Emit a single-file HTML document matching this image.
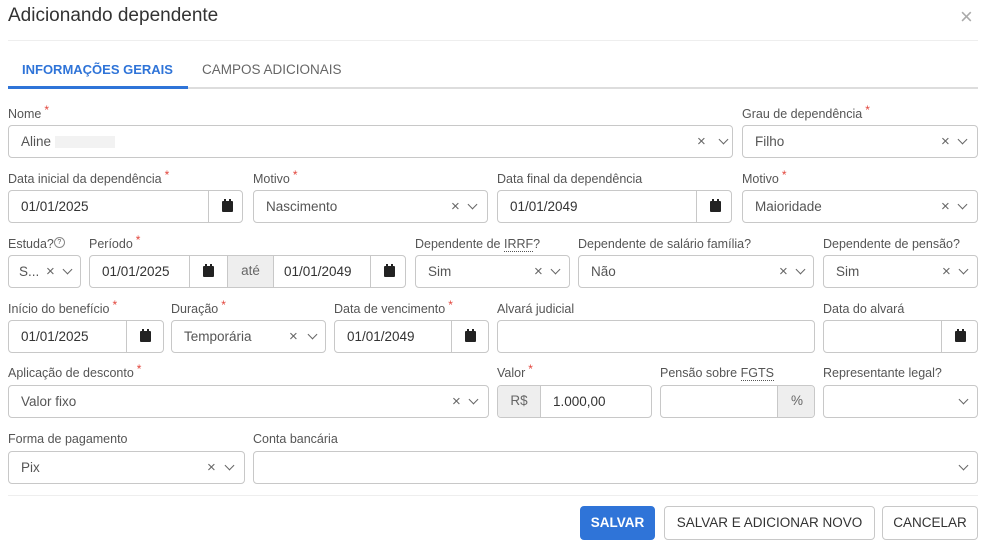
<!DOCTYPE html><html><head><style>
body{margin:0;width:986px;height:543px;background:#fff;font-family:"Liberation Sans",sans-serif;position:relative;overflow:hidden;color:#333}
.a{position:absolute}
.l{position:absolute;font-size:12.5px;color:#555;white-space:nowrap}
.l i{color:#e2453c;font-style:normal;font-size:12px;position:relative;top:-4px;margin-left:3px}
.f{position:absolute;height:33px;border:1px solid #c8c8c8;border-radius:4px;box-sizing:border-box;font-size:13.5px;color:#333;line-height:31px;padding-left:12px;white-space:nowrap;overflow:hidden}
.s{color:#555}
.x{position:absolute;top:0;font-size:15px;color:#666}
.cal{position:absolute;top:0;bottom:0;border-left:1px solid #c8c8c8;width:36px}
.cal:after{content:"";position:absolute;left:13px;top:10px;width:11px;height:11px;background:#222;border-radius:1px}
.cal:before{content:"";position:absolute;left:15px;top:8px;width:7px;height:3px;border-left:2px solid #222;border-right:2px solid #222;box-sizing:border-box}
.ch{position:absolute;top:10px;width:6px;height:6px;border-right:1.3px solid #666;border-bottom:1.3px solid #666;transform:rotate(45deg)}
.btn{position:absolute;top:506px;height:34px;border:1px solid #c8c8c8;border-radius:4px;box-sizing:border-box;font-size:13.5px;line-height:32px;text-align:center;color:#333}
</style></head><body>
<div class="a" style="left:8px;top:5px;font-size:19px;color:#333">Adicionando dependente</div>
<div class="a" style="left:960px;top:4px;font-size:22px;color:#aaa">×</div>
<div class="a" style="left:8px;top:40px;width:970px;height:1px;background:#eee"></div>
<div class="a" style="left:22px;top:62px;font-size:13px;font-weight:bold;color:#2f74d8">INFORMAÇÕES GERAIS</div>
<div class="a" style="left:202px;top:62px;font-size:13.5px;color:#666">CAMPOS ADICIONAIS</div>
<div class="a" style="left:8px;top:87px;width:970px;height:2px;background:#ddd"></div>
<div class="a" style="left:8px;top:86px;width:180px;height:3px;background:#2f74d8"></div>

<div class="l" style="left:8px;top:107px">Nome<i>*</i></div>
<div class="f s" style="left:8px;top:125px;width:725px">Aline <span style="display:inline-block;width:60px;height:12px;background:#f2f2f2;vertical-align:middle"></span><span class="x" style="left:688px">×</span><span class="ch" style="left:711px"></span></div>
<div class="l" style="left:742px;top:107px">Grau de dependência<i>*</i></div>
<div class="f s" style="left:742px;top:125px;width:236px">Filho<span class="x" style="left:198px">×</span><span class="ch" style="left:216px"></span></div>

<div class="l" style="left:8px;top:172px">Data inicial da dependência<i>*</i></div>
<div class="f" style="left:8px;top:190px;width:235px">01/01/2025<span class="cal" style="left:199px"></span></div>
<div class="l" style="left:253px;top:172px">Motivo<i>*</i></div>
<div class="f s" style="left:253px;top:190px;width:235px">Nascimento<span class="x" style="left:197px">×</span><span class="ch" style="left:215px"></span></div>
<div class="l" style="left:497px;top:172px">Data final da dependência</div>
<div class="f" style="left:497px;top:190px;width:235px">01/01/2049<span class="cal" style="left:198px"></span></div>
<div class="l" style="left:742px;top:172px">Motivo<i>*</i></div>
<div class="f s" style="left:742px;top:190px;width:236px">Maioridade<span class="x" style="left:198px">×</span><span class="ch" style="left:216px"></span></div>

<div class="l" style="left:8px;top:237px">Estuda?<span style="display:inline-block;width:9px;height:9px;border:1px solid #888;border-radius:50%;font-size:7px;line-height:9px;text-align:center;vertical-align:top">?</span></div>
<div class="f s" style="left:8px;top:255px;width:73px;padding-left:10px">S...<span class="x" style="left:37px">×</span><span class="ch" style="left:55px"></span></div>
<div class="l" style="left:89px;top:237px">Período<i>*</i></div>
<div class="f" style="left:89px;top:255px;width:317px">01/01/2025<span class="cal" style="left:99px"></span><span class="a" style="left:137px;top:0;width:45px;height:33px;background:#eee;border-left:1px solid #c8c8c8;border-right:1px solid #c8c8c8;text-align:center;color:#666;line-height:29px">até</span><span class="a" style="left:194px;top:0">01/01/2049</span><span class="cal" style="left:280px"></span></div>
<div class="l" style="left:415px;top:237px">Dependente de <span style="border-bottom:1px dotted #555">IRRF</span>?</div>
<div class="f s" style="left:415px;top:255px;width:155px">Sim<span class="x" style="left:118px">×</span><span class="ch" style="left:136px"></span></div>
<div class="l" style="left:578px;top:237px">Dependente de salário família?</div>
<div class="f s" style="left:578px;top:255px;width:236px">Não<span class="x" style="left:200px">×</span><span class="ch" style="left:218px"></span></div>
<div class="l" style="left:823px;top:237px">Dependente de pensão?</div>
<div class="f s" style="left:823px;top:255px;width:155px">Sim<span class="x" style="left:118px">×</span><span class="ch" style="left:136px"></span></div>

<div class="l" style="left:8px;top:302px">Início do benefício<i>*</i></div>
<div class="f" style="left:8px;top:320px;width:156px">01/01/2025<span class="cal" style="left:117px"></span></div>
<div class="l" style="left:171px;top:302px">Duração<i>*</i></div>
<div class="f s" style="left:171px;top:320px;width:155px">Temporária<span class="x" style="left:117px">×</span><span class="ch" style="left:137px"></span></div>
<div class="l" style="left:334px;top:302px">Data de vencimento<i>*</i></div>
<div class="f" style="left:334px;top:320px;width:155px">01/01/2049<span class="cal" style="left:116px"></span></div>
<div class="l" style="left:497px;top:302px">Alvará judicial</div>
<div class="f" style="left:497px;top:320px;width:318px"></div>
<div class="l" style="left:823px;top:302px">Data do alvará</div>
<div class="f" style="left:823px;top:320px;width:155px"><span class="cal" style="left:117px"></span></div>

<div class="l" style="left:8px;top:366px">Aplicação de desconto<i>*</i></div>
<div class="f s" style="left:8px;top:385px;width:481px">Valor fixo<span class="x" style="left:443px">×</span><span class="ch" style="left:461px"></span></div>
<div class="l" style="left:497px;top:366px">Valor<i>*</i></div>
<div class="f" style="left:497px;top:385px;width:155px;padding-left:0"><span class="a" style="left:0;top:0;width:42px;height:33px;background:#eee;border-right:1px solid #c8c8c8;text-align:center;color:#666;line-height:29px">R$</span><span class="a" style="left:55px;top:0">1.000,00</span></div>
<div class="l" style="left:660px;top:366px">Pensão sobre <span style="border-bottom:1px dotted #555">FGTS</span></div>
<div class="f" style="left:660px;top:385px;width:155px"><span class="a" style="left:116px;top:0;width:38px;height:33px;background:#eee;border-left:1px solid #c8c8c8;text-align:center;color:#666;line-height:29px">%</span></div>
<div class="l" style="left:823px;top:366px">Representante legal?</div>
<div class="f" style="left:823px;top:385px;width:155px"><span class="ch" style="left:136px"></span></div>

<div class="l" style="left:8px;top:432px">Forma de pagamento</div>
<div class="f s" style="left:8px;top:451px;width:237px">Pix<span class="x" style="left:198px">×</span><span class="ch" style="left:217px"></span></div>
<div class="l" style="left:253px;top:432px">Conta bancária</div>
<div class="f" style="left:253px;top:451px;width:725px"><span class="ch" style="left:706px"></span></div>

<div class="a" style="left:8px;top:495px;width:970px;height:1px;background:#eee"></div>
<div class="btn" style="left:580px;width:75px;background:#2f74d8;border-color:#2f74d8;color:#fff;font-weight:bold">SALVAR</div>
<div class="btn" style="left:664px;width:211px">SALVAR E ADICIONAR NOVO</div>
<div class="btn" style="left:882px;width:96px">CANCELAR</div>
</body></html>
